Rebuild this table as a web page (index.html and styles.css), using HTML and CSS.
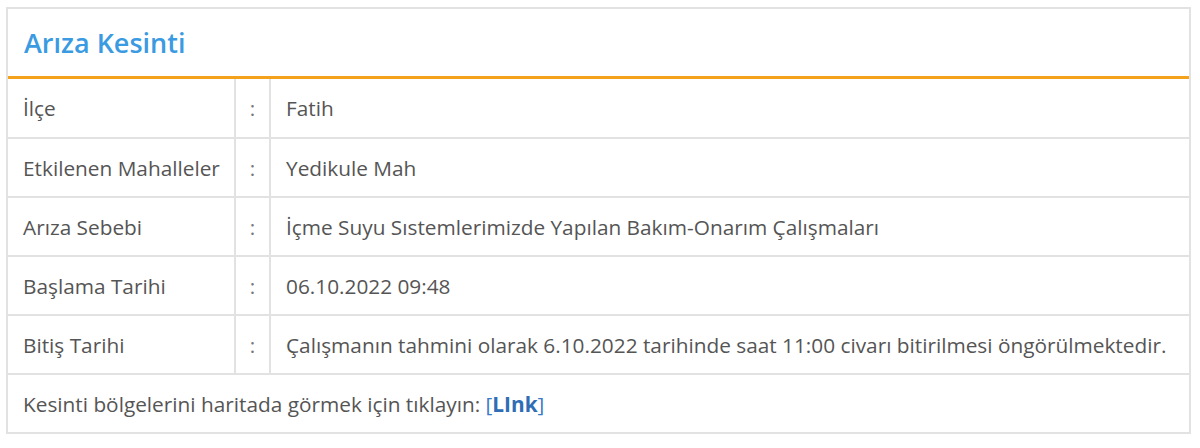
FILE: index.html
```html
<!DOCTYPE html>
<html lang="tr">
<head>
<meta charset="utf-8">
<link rel="stylesheet" href="styles.css">
</head>
<body>
<div class="panel">
  <div class="panel-head">Arıza Kesinti</div>
  <table class="info">
    <tr><td class="lbl">İlçe</td><td class="sep">:</td><td class="val">Fatih</td></tr>
    <tr><td class="lbl">Etkilenen Mahalleler</td><td class="sep">:</td><td class="val">Yedikule Mah</td></tr>
    <tr><td class="lbl">Arıza Sebebi</td><td class="sep">:</td><td class="val">İçme Suyu Sıstemlerimizde Yapılan Bakım-Onarım Çalışmaları</td></tr>
    <tr><td class="lbl">Başlama Tarihi</td><td class="sep">:</td><td class="val">06.10.2022 09:48</td></tr>
    <tr><td class="lbl">Bitiş Tarihi</td><td class="sep">:</td><td class="val">Çalışmanın tahmini olarak 6.10.2022 tarihinde saat 11:00 civarı bitirilmesi öngörülmektedir.</td></tr>
    <tr><td class="foot" colspan="3">Kesinti bölgelerini haritada görmek için tıklayın: <span class="br">[</span><a class="link" href="#">LInk</a><span class="br">]</span></td></tr>
  </table>
</div>
</body>
</html>
```
FILE: styles.css
```css
html, body { margin: 0; padding: 0; background: #fff; }
body { font-family: "Open Sans", "DejaVu Sans", sans-serif; color: #555; }
.panel {
  margin: 7px 9px 0 6px;
  border: 2px solid #e2e2e2;
  background: #fff;
}
.panel-head {
  height: 70px;
  box-sizing: border-box;
  padding: 0 0 0 16px;
  display: flex;
  align-items: center;
  font-size: 27px;
  font-weight: 600;
  color: #3a9ae2;
  border-bottom: 3px solid #f4a21c;
}
.info { width: 100%; border-collapse: collapse; }
.info td {
  height: 57px;
  padding: 0 0 0 15px;
  font-size: 20.8px;
  border-top: 2px solid #e2e2e2;
  vertical-align: middle;
  white-space: nowrap;
}
.info tr:first-child td { border-top: none; height: 58px; }
.lbl { width: 211px; border-right: 2px solid #e2e2e2; }
.sep { width: 33px; padding: 0 !important; text-align: center; border-right: 2px solid #e2e2e2; color: #777; }
.info td.foot { padding-left: 15px; }
.br { color: #3a7bc8; }
.link { color: #2f6db5; font-weight: 700; text-decoration: none; }
```
